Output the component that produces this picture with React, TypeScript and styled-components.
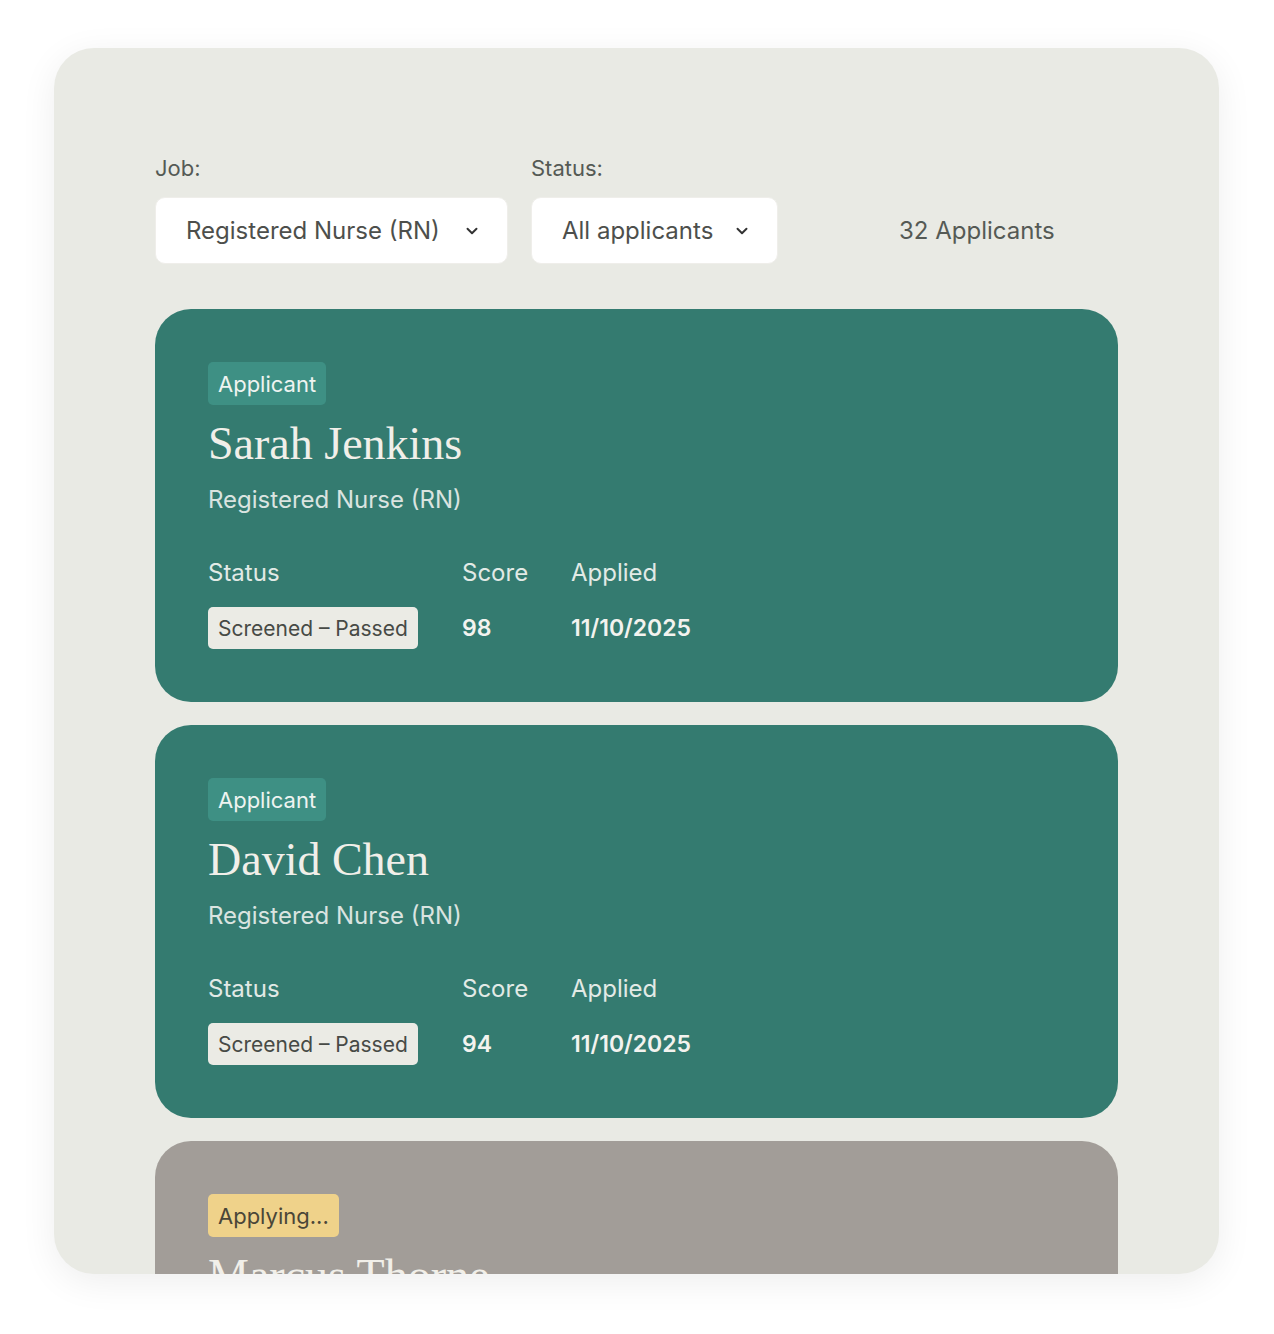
import styled, { createGlobalStyle } from 'styled-components'
import { ChevronDown } from 'lucide-react'

const GlobalStyle = createGlobalStyle`
  body {
    margin: 0;
    background: #ffffff;
    font-family: Inter, 'Noto Sans', sans-serif;
  }
`

type Tone = 'teal' | 'grey'

interface Applicant {
  name: string
  role: string
  status?: string
  score?: number
  applied?: string
  tone: Tone
}

const applicants: Applicant[] = [
  {
    name: 'Sarah Jenkins',
    role: 'Registered Nurse (RN)',
    status: 'Screened – Passed',
    score: 98,
    applied: '11/10/2025',
    tone: 'teal',
  },
  {
    name: 'David Chen',
    role: 'Registered Nurse (RN)',
    status: 'Screened – Passed',
    score: 94,
    applied: '11/10/2025',
    tone: 'teal',
  },
  {
    name: 'Marcus Thorne',
    role: 'Registered Nurse (RN)',
    tone: 'grey',
  },
]

const Page = styled.div`
  padding: 48px 55px 60px 54px;
`

const Panel = styled.div`
  width: 1165px;
  height: 1226px;
  box-sizing: border-box;
  padding: 106px 101px 0;
  background: #e9eae4;
  border-radius: 40px;
  overflow: hidden;
  box-shadow: 0 8px 36px rgba(0, 0, 0, 0.07);
`

const Filters = styled.div`
  display: flex;
  align-items: flex-end;
  gap: 23px;
  margin-bottom: 45px;
`

const Field = styled.div`
  display: flex;
  flex-direction: column;
`

const Label = styled.label`
  font-size: 22px;
  line-height: 28px;
  color: #555a55;
  margin-bottom: 15px;
`

const Select = styled.div<{ width: number }>`
  width: ${({ width }) => width}px;
  height: 67px;
  box-sizing: border-box;
  padding: 0 26px 0 30px;
  display: flex;
  align-items: center;
  justify-content: space-between;
  background: #ffffff;
  border-radius: 10px;
  border: 1px solid #efeeea;
  font-size: 24px;
  color: #4d4f4c;
`

const Count = styled.div`
  height: 67px;
  display: flex;
  align-items: center;
  margin-left: 98px;
  font-size: 24px;
  color: #555a55;
`

const Cards = styled.div`
  display: flex;
  flex-direction: column;
  gap: 23px;
`

const Card = styled.div<{ tone: Tone }>`
  padding: 53px;
  border-radius: 36px;
  background: ${({ tone }) => (tone === 'teal' ? '#347b70' : '#a29d98')};
`

const Badge = styled.span<{ tone: Tone }>`
  display: inline-flex;
  align-items: center;
  height: 43px;
  padding: 0 10px;
  border-radius: 5px;
  font-size: 22px;
  background: ${({ tone }) => (tone === 'teal' ? '#3e9084' : '#efd28a')};
  color: ${({ tone }) => (tone === 'teal' ? '#eef4f1' : '#4a4638')};
`

const Name = styled.h2`
  margin: 11px 0 0;
  font-family: 'Liberation Serif', 'DejaVu Serif', serif;
  font-weight: 400;
  font-size: 46px;
  line-height: 56px;
  color: #f1efe9;
`

const Role = styled.div`
  margin-top: 13px;
  font-size: 24px;
  line-height: 30px;
  color: #dae4e0;
`

const Stats = styled.div`
  margin-top: 43px;
  display: grid;
  grid-template-columns: 254px 109px auto;
  row-gap: 19px;
  align-items: center;
`

const StatLabel = styled.div`
  font-size: 24px;
  line-height: 30px;
  color: #e2eae6;
`

const StatValue = styled.div`
  font-size: 23px;
  font-weight: 600;
  color: #f3f3ef;
`

const Pill = styled.span`
  justify-self: start;
  display: inline-flex;
  align-items: center;
  height: 42px;
  padding: 0 10px;
  border-radius: 5px;
  background: #ebebe5;
  color: #474a46;
  font-size: 21px;
`

const ApplicantCard = ({ applicant }: { applicant: Applicant }) => {
  const applying = applicant.tone === 'grey'
  return (
    <Card tone={applicant.tone}>
      <Badge tone={applicant.tone}>{applying ? 'Applying...' : 'Applicant'}</Badge>
      <Name>{applicant.name}</Name>
      {!applying && (
        <>
          <Role>{applicant.role}</Role>
          <Stats>
            <StatLabel>Status</StatLabel>
            <StatLabel>Score</StatLabel>
            <StatLabel>Applied</StatLabel>
            <Pill>{applicant.status}</Pill>
            <StatValue>{applicant.score}</StatValue>
            <StatValue>{applicant.applied}</StatValue>
          </Stats>
        </>
      )}
    </Card>
  )
}

export default function App() {
  return (
    <>
      <GlobalStyle />
      <Page>
        <Panel>
          <Filters>
            <Field>
              <Label>Job:</Label>
              <Select width={353}>
                Registered Nurse (RN)
                <ChevronDown size={18} strokeWidth={2.6} color="#333" />
              </Select>
            </Field>
            <Field>
              <Label>Status:</Label>
              <Select width={247}>
                All applicants
                <ChevronDown size={18} strokeWidth={2.6} color="#333" />
              </Select>
            </Field>
            <Count>32 Applicants</Count>
          </Filters>
          <Cards>
            {applicants.map((a) => (
              <ApplicantCard key={a.name} applicant={a} />
            ))}
          </Cards>
        </Panel>
      </Page>
    </>
  )
}
